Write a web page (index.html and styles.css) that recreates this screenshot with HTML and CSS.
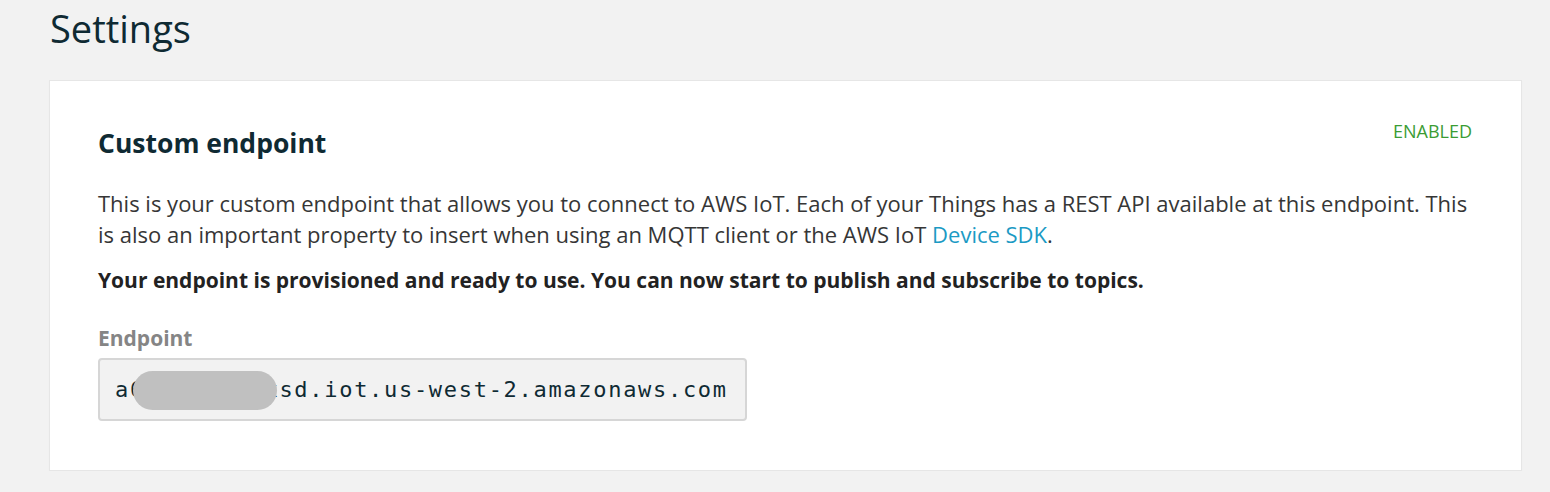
FILE: index.html
```html
<!DOCTYPE html>
<html lang="en">
<head>
<meta charset="utf-8">
<title>Settings</title>
<link rel="stylesheet" href="styles.css">
</head>
<body>
<main class="page">
  <h1 class="page-title">Settings</h1>
  <section class="card">
    <div class="card-head">
      <h2 class="card-title">Custom endpoint</h2>
      <span class="status">ENABLED</span>
    </div>
    <p class="desc">This is your custom endpoint that allows you to connect to AWS IoT. Each of your Things has a REST API available at this endpoint. This is also an important property to insert when using an MQTT client or the AWS IoT <a class="link" href="#">Device SDK</a>.</p>
    <p class="note">Your endpoint is provisioned and ready to use. You can now start to publish and subscribe to topics.</p>
    <div class="field">
      <div class="field-label">Endpoint</div>
      <div class="field-box">
        <span class="mono"><span class="masked">a6xxxxxxxxx<span class="blur"></span></span>sd.iot.us-west-2.amazonaws.com</span>
      </div>
    </div>
  </section>
</main>
</body>
</html>
```
FILE: styles.css
```css
* { box-sizing: border-box; }
html, body { margin: 0; padding: 0; }
body {
  background: #f2f2f2;
  font-family: "Open Sans", "Noto Sans", sans-serif;
  color: #363636;
}
.page {
  padding: 6px 28px 0 49px;
}
.page-title {
  margin: 0;
  font-weight: 400;
  font-size: 38px;
  line-height: 44px;
  color: #0f2a33;
  padding-left: 1px;
}
.card {
  margin-top: 30px;
  background: #ffffff;
  border: 1px solid #e6e6e6;
  box-shadow: 0 1px 1px rgba(0,0,0,0.04);
  padding: 38px 49px 49px 48px;
}
.card-head {
  display: flex;
  justify-content: space-between;
  align-items: flex-start;
}
.card-title {
  margin: 7.5px 0 0;
  font-size: 26.5px;
  font-weight: 700;
  line-height: 32px;
  color: #0f2a33;
}
.status {
  color: #3b9c34;
  font-size: 18px;
  line-height: 24px;
}
.desc {
  margin: 29px 0 0;
  font-size: 22px;
  line-height: 31px;
  color: #363636;
}
.link { color: #1b9ac4; text-decoration: none; }
.note {
  margin: 15px 0 0;
  font-size: 21px;
  line-height: 30px;
  font-weight: 700;
  color: #222222;
}
.field { margin-top: 29px; }
.field-label {
  font-size: 21px;
  font-weight: 700;
  color: #858585;
  line-height: 28px;
}
.field-box {
  margin-top: 6px;
  width: 649px;
  height: 63px;
  background: #f2f2f2;
  border: 2px solid #d6d6d6;
  border-radius: 4px;
  display: flex;
  align-items: center;
  padding-left: 15px;
}
.mono {
  font-family: "DejaVu Sans Mono", "Liberation Mono", monospace;
  font-size: 22px;
  letter-spacing: 1.7px;
  color: #0f2a33;
  white-space: nowrap;
}
.masked { position: relative; }
.blur {
  position: absolute;
  left: 18px;
  top: -6px;
  width: 144px;
  height: 39px;
  border-radius: 20px;
  background: #c0c0c0;
}
```
